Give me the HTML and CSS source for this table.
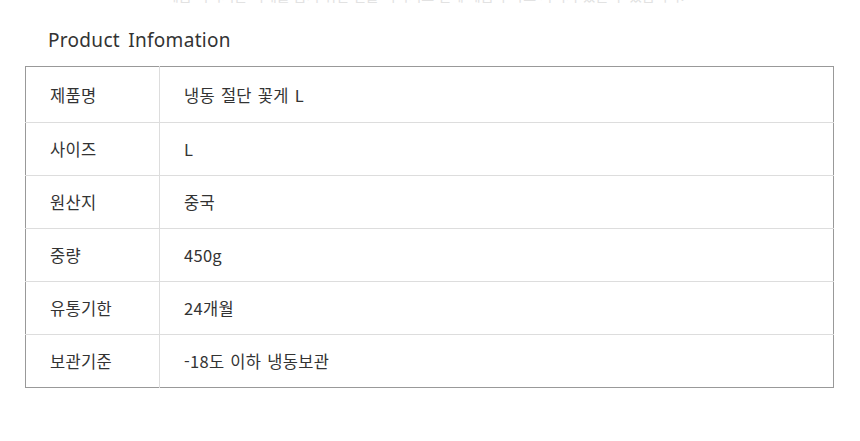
FILE: index.html
```html
<!DOCTYPE html>
<html lang="ko">
<head>
<meta charset="utf-8">
<title>Product Infomation</title>
<link rel="stylesheet" href="styles.css">
</head>
<body>
<div class="top-note"><span>* 제품 이미지는 이해를 돕기 위한 연출 이미지로 실제 제품과 다소 차이가 있을 수 있습니다.</span></div>
<section class="info">
  <h2 class="info-title">Product Infomation</h2>
  <table class="info-table">
    <tr class="row-first"><th>제품명</th><td>냉동 절단 꽃게 L</td></tr>
    <tr><th>사이즈</th><td>L</td></tr>
    <tr><th>원산지</th><td>중국</td></tr>
    <tr><th>중량</th><td>450g</td></tr>
    <tr><th>유통기한</th><td>24개월</td></tr>
    <tr><th>보관기준</th><td>-18도 이하 냉동보관</td></tr>
  </table>
</section>
</body>
</html>
```

FILE: styles.css
```css
html, body {
  margin: 0;
  padding: 0;
  background: #fff;
}
body {
  font-family: "Noto Sans CJK KR", "Noto Sans", sans-serif;
  color: #333;
}
.top-note {
  height: 3px;
  overflow: hidden;
  display: flex;
  align-items: flex-end;
  justify-content: center;
}
.top-note span {
  font-size: 14px;
  line-height: 16px;
  color: #e2e2e2;
  white-space: nowrap;
  margin-left: -20px;
}
.info {
  padding: 0 26px 0 25px;
}
.info-title {
  margin: 0;
  padding: 25px 0 0 23px;
  height: 38px;
  box-sizing: content-box;
  font-family: "Noto Sans", "Noto Sans CJK KR", sans-serif;
  font-weight: 400;
  font-size: 19px;
  letter-spacing: 0.3px;
  word-spacing: 3px;
  line-height: 24px;
  color: #333;
}
.info-table {
  width: 100%;
  border-collapse: collapse;
  border: 1px solid #999;
  font-size: 16.5px;
  letter-spacing: 0.3px;
  word-spacing: 1px;
}
.info-table th,
.info-table td {
  height: 52px;
  padding: 0 0 0 24px;
  border-top: 1px solid #ddd;
  text-align: left;
  font-weight: 400;
  color: #333;
  vertical-align: middle;
}
.info-table th {
  width: 109px;
  border-right: 1px solid #ddd;
}
.info-table .row-first th,
.info-table .row-first td {
  height: 55px;
  border-top: 1px solid #999;
}
```
